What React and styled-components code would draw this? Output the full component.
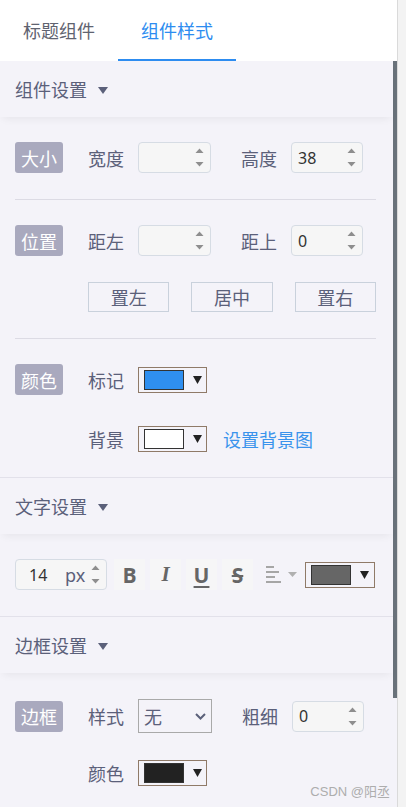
import React from "react";
import styled, { createGlobalStyle } from "styled-components";

const GlobalStyles = createGlobalStyle`
  html, body {
    margin: 0;
    padding: 0;
    height: 100%;
  }
  body {
    font-family: "Noto Sans", "Noto Sans CJK SC", sans-serif;
    background: #f3f3f3;
  }
  #root {
    height: 100%;
  }
`;

// visible part of the settings list vs its full height
const VIEW_HEIGHT = 746;
const CONTENT_HEIGHT = 874;

const Caret = () => (
  <svg width="10" height="7" viewBox="0 0 10 7">
    <polygon points="0,0 10,0 5,7" fill="currentColor" />
  </svg>
);

const Spinner = () => (
  <SpinnerIcon width="9" height="19" viewBox="0 0 9 19">
    <polygon points="0.5,5 4.5,0.5 8.5,5" fill="#8e8e8e" />
    <polygon points="0.5,14 8.5,14 4.5,18.5" fill="#8e8e8e" />
  </SpinnerIcon>
);

const NumberInput = ({ value, width = 73, unit }) => (
  <NumberBox $width={width}>
    <NumberValue $wide={!!unit}>{value}</NumberValue>
    {unit && <Unit>{unit}</Unit>}
    <Spinner />
  </NumberBox>
);

const ColorPicker = ({ color, width = 69 }) => (
  <ColorBox $width={width}>
    <Swatch $color={color} />
    <svg width="9" height="8" viewBox="0 0 9 8">
      <polygon points="0,0 9,0 4.5,8" fill="#222" />
    </svg>
  </ColorBox>
);

const Field = ({ label, children }) => (
  <FieldWrap>
    <Label>{label}</Label>
    {children}
  </FieldWrap>
);

const App = () => {
  const thumbHeight = Math.round((VIEW_HEIGHT * VIEW_HEIGHT) / CONTENT_HEIGHT);

  return (
    <Page>
      <GlobalStyles />
      <Panel>
        <TabBar>
          <Tab>标题组件</Tab>
          <Tab $active>组件样式</Tab>
        </TabBar>

        <Body>
          <Content>
            <SectionHeader $first>
              组件设置
              <CaretWrap>
                <Caret />
              </CaretWrap>
            </SectionHeader>

            <Group $divider>
              <Row>
                <Badge>大小</Badge>
                <Field label="宽度">
                  <NumberInput value="" />
                </Field>
                <Field label="高度">
                  <NumberInput value="38" width={72} />
                </Field>
              </Row>
            </Group>

            <Group $divider>
              <Row>
                <Badge>位置</Badge>
                <Field label="距左">
                  <NumberInput value="" />
                </Field>
                <Field label="距上">
                  <NumberInput value="0" width={72} />
                </Field>
              </Row>
              <ButtonRow>
                <PlainButton>置左</PlainButton>
                <PlainButton>居中</PlainButton>
                <PlainButton>置右</PlainButton>
              </ButtonRow>
            </Group>

            <Group $last>
              <Row>
                <Badge>颜色</Badge>
                <Field label="标记">
                  <ColorPicker color="#2f8ff0" />
                </Field>
              </Row>
              <Row $indent>
                <Field label="背景">
                  <ColorPicker color="#ffffff" />
                </Field>
                <LinkText>设置背景图</LinkText>
              </Row>
            </Group>

            <SectionHeader>
              文字设置
              <CaretWrap>
                <Caret />
              </CaretWrap>
            </SectionHeader>

            <Group>
              <Row>
                <NumberInput value="14" width={92} unit="px" />
                <FormatGroup>
                  <FormatButton $bold>B</FormatButton>
                  <FormatButton $italic>I</FormatButton>
                  <FormatButton $underline>U</FormatButton>
                  <FormatButton $strike>S</FormatButton>
                </FormatGroup>
                <AlignPicker>
                  <svg width="15" height="17" viewBox="0 0 15 17">
                    <g stroke="#a6a6a6" strokeWidth="2">
                      <line x1="0" y1="1" x2="8" y2="1" />
                      <line x1="0" y1="6" x2="13" y2="6" />
                      <line x1="0" y1="11" x2="9" y2="11" />
                      <line x1="0" y1="16" x2="15" y2="16" />
                    </g>
                  </svg>
                  <svg width="9" height="5" viewBox="0 0 9 5">
                    <polygon points="0,0 9,0 4.5,5" fill="#b0b0b0" />
                  </svg>
                </AlignPicker>
                <ColorPicker color="#666666" width={70} />
              </Row>
            </Group>

            <SectionHeader>
              边框设置
              <CaretWrap>
                <Caret />
              </CaretWrap>
            </SectionHeader>

            <Group $tail>
              <Row $tall>
                <Badge>边框</Badge>
                <Field label="样式">
                  <SelectBox>
                    无
                    <svg width="11" height="7" viewBox="0 0 11 7">
                      <polyline
                        points="1,1 5.5,5.5 10,1"
                        fill="none"
                        stroke="#5b607a"
                        strokeWidth="2"
                      />
                    </svg>
                  </SelectBox>
                </Field>
                <Field label="粗细">
                  <NumberInput value="0" width={72} />
                </Field>
              </Row>
              <Row $indent>
                <Field label="颜色">
                  <ColorPicker color="#222222" />
                </Field>
              </Row>
            </Group>
          </Content>

          <ScrollTrack>
            <ScrollThumb style={{ height: thumbHeight }} />
          </ScrollTrack>
        </Body>
      </Panel>
      <Watermark>CSDN @阳丞</Watermark>
    </Page>
  );
};

const Page = styled.div`
  position: relative;
  display: flex;
  height: 100vh;
  overflow: hidden;
  background: #f3f3f3;
`;

const Panel = styled.div`
  width: 398px;
  box-sizing: border-box;
  border-right: 1px solid #dadada;
  display: flex;
  flex-direction: column;
  flex-shrink: 0;
`;

const TabBar = styled.div`
  height: 61px;
  flex-shrink: 0;
  display: flex;
  background: #ffffff;
  position: relative;
  z-index: 2;
`;

const Tab = styled.div`
  box-sizing: border-box;
  height: 61px;
  padding: 0 23px;
  display: flex;
  align-items: center;
  font-size: 18px;
  color: ${(p) => (p.$active ? "#2d8cf0" : "#5f6370")};
  border-bottom: 2px solid ${(p) => (p.$active ? "#2d8cf0" : "transparent")};
`;

const Body = styled.div`
  flex: 1;
  min-height: 0;
  display: flex;
  overflow: hidden;
  background: #f4f3f9;
`;

const Content = styled.div`
  flex: 1;
  min-width: 0;
`;

const ScrollTrack = styled.div`
  width: 4px;
  flex-shrink: 0;
`;

const ScrollThumb = styled.div`
  background: #69727a;
`;

const SectionHeader = styled.div`
  position: relative;
  z-index: 1;
  height: 56px;
  display: flex;
  align-items: center;
  padding-left: 15px;
  font-size: 18px;
  color: #5b607a;
  background: #f4f3f9;
  border-top: ${(p) => (p.$first ? "none" : "1px solid #e2e1ea")};
  box-shadow: 0 5px 8px -3px rgba(0, 0, 0, 0.06);
`;

const CaretWrap = styled.span`
  display: flex;
  margin-left: 11px;
  margin-top: 2px;
  color: #5b607a;
`;

const Group = styled.div`
  margin: 0 17px 0 15px;
  padding: ${(p) =>
    p.$last ? "25px 0 23px" : p.$tail ? "26px 0 147px" : "25px 0 26px"};
  border-bottom: ${(p) => (p.$divider ? "1px solid #dcdbe4" : "none")};
  display: flex;
  flex-direction: column;
  gap: ${(p) => (p.$tail ? "24px" : "28px")};
`;

const Row = styled.div`
  display: flex;
  align-items: center;
  min-height: ${(p) => (p.$tall ? "34px" : "31px")};
  padding-left: ${(p) => (p.$indent ? "73px" : "0")};
`;

const Badge = styled.div`
  width: 48px;
  height: 31px;
  margin-right: 25px;
  border-radius: 3px;
  background: #a9a9be;
  color: #ffffff;
  font-size: 18px;
  display: flex;
  align-items: center;
  justify-content: center;
  flex-shrink: 0;
`;

const FieldWrap = styled.div`
  display: flex;
  align-items: center;

  & + & {
    margin-left: 30px;
  }
`;

const Label = styled.span`
  width: 36px;
  margin-right: 14px;
  font-size: 18px;
  color: #5b607a;
  white-space: nowrap;
`;

const NumberBox = styled.div`
  box-sizing: border-box;
  width: ${(p) => p.$width}px;
  height: 31px;
  border: 1px solid #d6dce4;
  border-radius: 4px;
  background: #f6f6f6;
  display: flex;
  align-items: center;
  flex-shrink: 0;
`;

const NumberValue = styled.span`
  padding-left: ${(p) => (p.$wide ? "13px" : "6px")};
  width: ${(p) => (p.$wide ? "36px" : "auto")};
  font-size: 16px;
  color: #333333;
`;

const Unit = styled.span`
  font-size: 18px;
  color: #5b607a;
`;

const SpinnerIcon = styled.svg`
  margin-left: auto;
  margin-right: 6px;
`;

const ButtonRow = styled.div`
  display: grid;
  grid-template-columns: repeat(3, 1fr);
  gap: 22px;
  padding-left: 73px;
  margin-top: -2px;
`;

const PlainButton = styled.div`
  box-sizing: border-box;
  height: 30px;
  border: 1px solid #c9d1dc;
  display: flex;
  align-items: center;
  justify-content: center;
  font-size: 18px;
  color: #5b607a;
`;

const ColorBox = styled.div`
  box-sizing: border-box;
  width: ${(p) => p.$width}px;
  height: 26px;
  border: 1px solid #8f7a68;
  padding-left: 5px;
  display: flex;
  align-items: center;
  gap: 9px;
  flex-shrink: 0;
`;

const Swatch = styled.span`
  box-sizing: border-box;
  width: 40px;
  height: 20px;
  border: 1px solid #333333;
  background: ${(p) => p.$color};
`;

const LinkText = styled.span`
  margin-left: 16px;
  font-size: 18px;
  color: #3a93ec;
`;

const FormatGroup = styled.div`
  display: flex;
  gap: 5px;
  margin-left: 7px;
`;

const FormatButton = styled.div`
  width: 31px;
  height: 31px;
  background: #f6f6f7;
  display: flex;
  align-items: center;
  justify-content: center;
  color: #666666;
  font-size: 21px;
  font-weight: bold;
  font-family: ${(p) =>
    p.$italic ? '"Liberation Serif", serif' : '"Open Sans", "Noto Sans", sans-serif'};
  font-style: ${(p) => (p.$italic ? "italic" : "normal")};
  text-decoration: ${(p) =>
    p.$underline ? "underline" : p.$strike ? "line-through" : "none"};
  text-decoration-thickness: 2px;
  text-underline-offset: 3px;
`;

const AlignPicker = styled.div`
  display: flex;
  align-items: center;
  gap: 7px;
  margin-left: 13px;
  margin-right: 8px;
`;

const SelectBox = styled.div`
  box-sizing: border-box;
  width: 74px;
  height: 34px;
  border: 1px solid #a9a9a9;
  padding: 0 5px;
  display: flex;
  align-items: center;
  justify-content: space-between;
  font-size: 18px;
  color: #5b607a;
`;

const Watermark = styled.div`
  position: absolute;
  right: 16px;
  bottom: 7px;
  font-size: 13px;
  color: #adadad;
  font-family: "Liberation Sans", "Noto Sans CJK SC", sans-serif;
`;

export default App;
